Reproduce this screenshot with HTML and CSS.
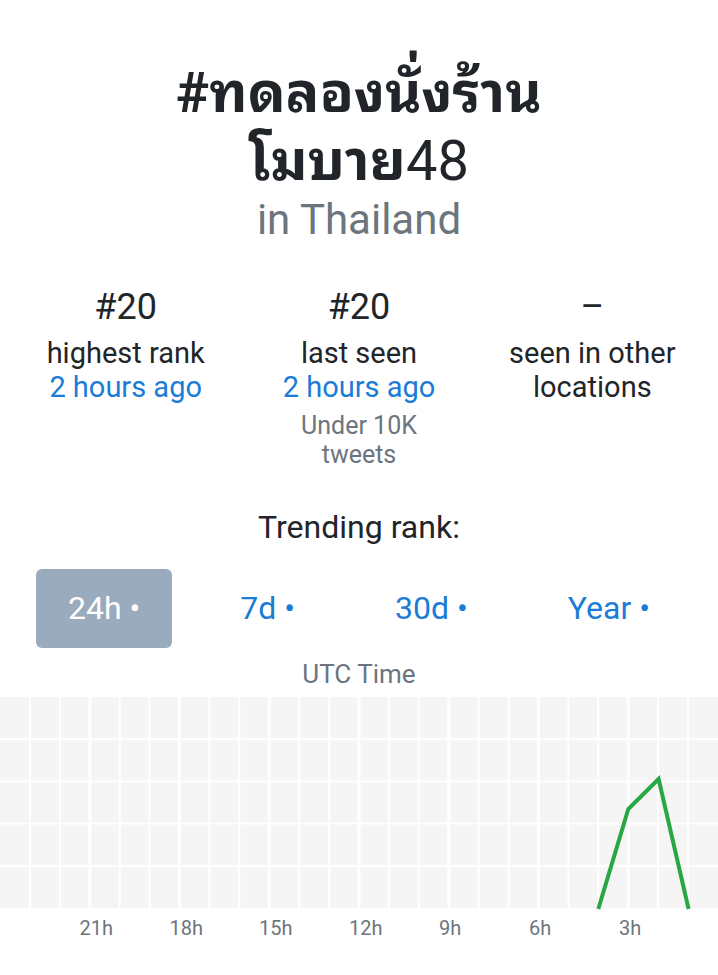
FILE: index.html
```html
<!DOCTYPE html>
<html lang="th">
  <head>
    <meta charset="UTF-8" />
    <meta name="viewport" content="width=device-width, initial-scale=1.0" />
    <title>#ทดลองนั่งร้านโมบาย48 in Thailand</title>
    <link rel="stylesheet" href="styles.css">
  </head>
  <body>
    <header class="trend-header">
      <h1 class="trend-name">#ทดลองนั่งร้าน<br />โมบาย<span class="num">48</span></h1>
      <p class="trend-location">in Thailand</p>
    </header>

    <section class="stats">
      <div class="stat">
        <div class="stat-value">#20</div>
        <div class="stat-label">highest rank</div>
        <div class="stat-time">2 hours ago</div>
      </div>
      <div class="stat">
        <div class="stat-value">#20</div>
        <div class="stat-label">last seen</div>
        <div class="stat-time">2 hours ago</div>
        <div class="stat-note">Under 10K<br />tweets</div>
      </div>
      <div class="stat">
        <div class="stat-value">–</div>
        <div class="stat-label">seen in other<br />locations</div>
      </div>
    </section>

    <h2 class="chart-title">Trending rank:</h2>

    <nav class="ranges">
      <a class="range active" href="#">24h •</a>
      <a class="range" href="#">7d •</a>
      <a class="range" href="#">30d •</a>
      <a class="range" href="#">Year •</a>
    </nav>

    <div class="axis-title">UTC Time</div>

    <!-- 24 one-hour columns, newest on the right -->
    <svg class="chart" viewBox="0 0 718 279" width="718" height="279">
      <rect x="0" y="0" width="718" height="211" fill="#f5f5f5" />
      <g stroke="#fff" stroke-width="2">
        <line x1="0" y1="42.2" x2="718" y2="42.2" />
        <line x1="0" y1="84.4" x2="718" y2="84.4" />
        <line x1="0" y1="126.6" x2="718" y2="126.6" />
        <line x1="0" y1="168.8" x2="718" y2="168.8" />
        <line x1="29.9" y1="0" x2="29.9" y2="211" />
        <line x1="59.8" y1="0" x2="59.8" y2="211" />
        <line x1="89.8" y1="0" x2="89.8" y2="211" stroke-width="3" />
        <line x1="119.7" y1="0" x2="119.7" y2="211" />
        <line x1="149.6" y1="0" x2="149.6" y2="211" />
        <line x1="179.5" y1="0" x2="179.5" y2="211" stroke-width="3" />
        <line x1="209.4" y1="0" x2="209.4" y2="211" />
        <line x1="239.3" y1="0" x2="239.3" y2="211" />
        <line x1="269.3" y1="0" x2="269.3" y2="211" stroke-width="3" />
        <line x1="299.2" y1="0" x2="299.2" y2="211" />
        <line x1="329.1" y1="0" x2="329.1" y2="211" />
        <line x1="359" y1="0" x2="359" y2="211" stroke-width="3" />
        <line x1="388.9" y1="0" x2="388.9" y2="211" />
        <line x1="418.8" y1="0" x2="418.8" y2="211" />
        <line x1="448.8" y1="0" x2="448.8" y2="211" stroke-width="3" />
        <line x1="478.7" y1="0" x2="478.7" y2="211" />
        <line x1="508.6" y1="0" x2="508.6" y2="211" />
        <line x1="538.5" y1="0" x2="538.5" y2="211" stroke-width="3" />
        <line x1="568.4" y1="0" x2="568.4" y2="211" />
        <line x1="598.3" y1="0" x2="598.3" y2="211" />
        <line x1="628.3" y1="0" x2="628.3" y2="211" stroke-width="3" />
        <line x1="658.2" y1="0" x2="658.2" y2="211" />
        <line x1="688.1" y1="0" x2="688.1" y2="211" />
      </g>
      <polyline points="598.3,212 628.3,112 658.6,82 688.6,212" fill="none"
        stroke="#28a745" stroke-width="4" stroke-linejoin="miter" />
      <g class="tick">
        <text x="79.5" y="238">21h</text>
        <text x="169.5" y="238">18h</text>
        <text x="259" y="238">15h</text>
        <text x="349" y="238">12h</text>
        <text x="439" y="238">9h</text>
        <text x="529" y="238">6h</text>
        <text x="619" y="238">3h</text>
      </g>
    </svg>
  </body>
</html>
```

FILE: styles.css
```css
* {
  box-sizing: border-box;
  margin: 0;
  padding: 0;
}

body {
  font-family: Roboto, "Noto Sans Thai Looped", "Noto Sans Thai", "Noto Sans", sans-serif;
  color: #212529;
  background: #fff;
  text-align: center;
  width: 718px;
  overflow: hidden;
}

a {
  text-decoration: none;
}

.trend-header {
  padding-top: 59px;
}

.trend-name {
  font-size: 56px;
  font-weight: 700;
  line-height: 68px;
  color: #212529;
}

.trend-name .num {
  font-weight: 400;
}

.trend-location {
  font-size: 42px;
  line-height: 50px;
  color: #6c757d;
  margin-top: 0;
}

.stats {
  display: flex;
  padding: 0 9px;
  margin-top: 42px;
}

.stat {
  flex: 1;
}

.stat-value {
  font-size: 36px;
  line-height: 40px;
  margin-bottom: 9px;
}

.stat-label {
  font-size: 29px;
  line-height: 34px;
}

.stat-time {
  font-size: 29px;
  line-height: 34px;
  color: #1a7cd6;
}

.stat-note {
  font-size: 25px;
  line-height: 29px;
  color: #6c757d;
  margin-top: 7px;
}

.chart-title {
  font-size: 32px;
  font-weight: 400;
  line-height: 40px;
  margin-top: 38px;
}

.ranges {
  display: flex;
  justify-content: space-evenly;
  align-items: center;
  margin-top: 22px;
}

.range {
  display: block;
  font-size: 32px;
  line-height: 79px;
  padding: 0 32px;
  border-radius: 6px;
  color: #1a7cd6;
}

.range.active {
  background: #9aabbd;
  color: #fff;
}

.axis-title {
  font-size: 26px;
  line-height: 32px;
  color: #6c757d;
  margin-top: 10px;
}

.chart {
  display: block;
  margin-top: 7px;
}

.tick text {
  font-family: Roboto, sans-serif;
  font-size: 20px;
  fill: #6c757d;
}
```
